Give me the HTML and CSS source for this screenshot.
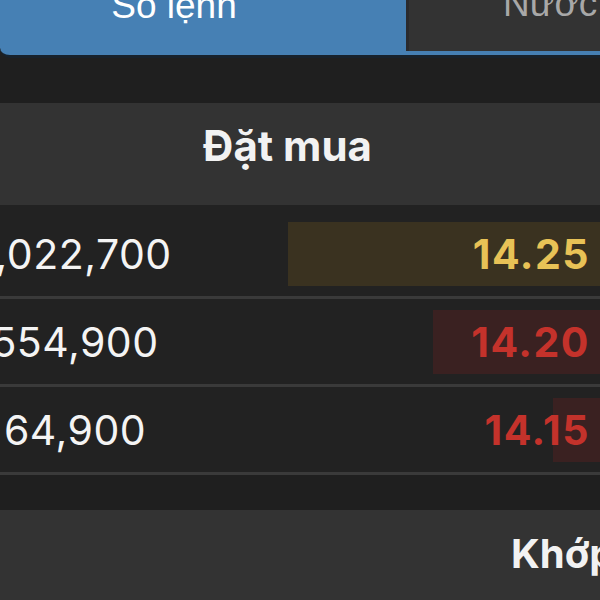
FILE: index.html
```html
<!DOCTYPE html>
<html lang="vi">
<head>
<meta charset="utf-8">
<title>Sổ lệnh</title>
<link rel="stylesheet" href="styles.css">
</head>
<body>
<div class="screen">
  <div class="tabs">
    <div class="tab tab-active"><span class="tab-label">Sổ lệnh</span></div>
    <div class="tab-sep"></div>
    <div class="tab tab-other"><span class="tab-label">Nước đi</span></div>
  </div>

  <div class="section-head head-buy">Đặt mua</div>

  <div class="book">
    <div class="row">
      <div class="vol">1,022,700</div>
      <div class="price price-ref">
        <div class="bar" style="width:312px"></div>
        <span class="price-text">14.25</span>
      </div>
    </div>
    <div class="row">
      <div class="vol">554,900</div>
      <div class="price price-down">
        <div class="bar" style="width:167px"></div>
        <span class="price-text">14.20</span>
      </div>
    </div>
    <div class="row">
      <div class="vol">64,900</div>
      <div class="price price-down">
        <div class="bar" style="width:47px"></div>
        <span class="price-text">14.15</span>
      </div>
    </div>
  </div>

  <div class="section-head head-match">Khớp lệnh</div>
</div>
</body>
</html>
```

FILE: styles.css
```css
html, body {
  margin: 0;
  padding: 0;
  background: #222222;
}

.screen {
  width: 600px;
  height: 600px;
  overflow: hidden;
  background: #1f1f1f;
  font-family: Inter, "Noto Sans", sans-serif;
  color: #f2f2f2;
}

/* segmented tabs */
.tabs {
  display: flex;
  height: 100px;
  margin-top: -45px;
  background: #4680b4;
  border-bottom: 3px solid #18222c;
  border-bottom-left-radius: 10px;
}

.tab {
  display: flex;
  align-items: center;
  font-family: "Liberation Sans", Arial, sans-serif;
  font-size: 37px;
  line-height: 1;
  white-space: nowrap;
}

.tab-active {
  flex: 0 0 406px;
  justify-content: center;
  padding-right: 58px;
  box-sizing: border-box;
  color: #ffffff;
}

.tab-sep {
  flex: 0 0 3px;
  height: 96px;
  background: #2a2a2e;
}

.tab-other {
  flex: 1 1 auto;
  height: 96px;
  padding-left: 94px;
  background: #333333;
  color: #a8a8a8;
  overflow: hidden;
}

/* section headers */
.section-head {
  background: #333333;
  font-weight: 700;
  white-space: nowrap;
  overflow: hidden;
}

.head-buy {
  margin-top: 45px;
  height: 102px;
  box-sizing: border-box;
  padding-top: 22px;
  padding-right: 25px;
  font-size: 42px;
  line-height: 42px;
  text-align: center;
}

.head-match {
  margin-top: 35px;
  height: 85px;
  box-sizing: border-box;
  padding-top: 24px;
  padding-left: 511px;
  font-size: 40px;
  line-height: 40px;
  border-bottom: 5px solid #1c1c1c;
  box-sizing: content-box;
}

/* order book */
.book {
  background: #222222;
  padding-top: 6px;
}

.row {
  display: grid;
  grid-template-columns: 150px 1fr;
  height: 88px;
  box-sizing: border-box;
  padding: 11px 0 10px;
  border-bottom: 3px solid #3a3a3a;
  background: #222222;
}

.vol {
  display: flex;
  justify-content: center;
  align-items: center;
  font-size: 41px;
  line-height: 1;
  font-weight: 400;
  letter-spacing: 0.5px;
  color: #f4f4f4;
  white-space: nowrap;
}

.price {
  position: relative;
  display: flex;
  justify-content: flex-end;
  align-items: center;
  padding-right: 10px;
  font-size: 41px;
  line-height: 1;
  font-weight: 700;
  letter-spacing: 1.5px;
}

.bar {
  position: absolute;
  top: 0;
  bottom: 0;
  right: 0;
}

.price-text {
  position: relative;
}

.price-ref .bar { background: #3a3220; }
.price-ref .price-text { color: #e8c256; }

.price-down .bar { background: #3a2121; }
.price-down .price-text { color: #c4322b; }
```
